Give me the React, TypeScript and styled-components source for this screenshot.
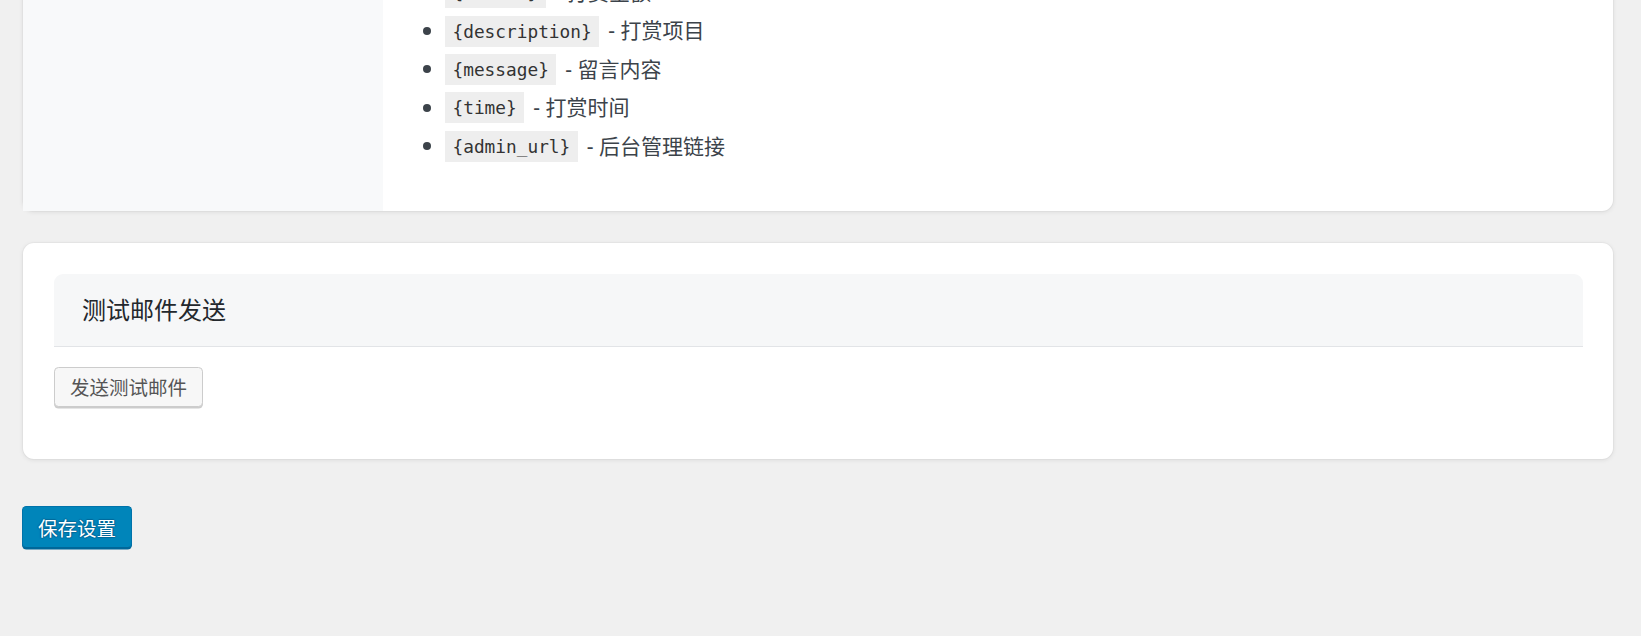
import React from "react";
import styled, { createGlobalStyle } from "styled-components";

const GlobalStyle = createGlobalStyle`
  html, body {
    margin: 0;
    padding: 0;
    background: #f0f0f0;
  }
  body {
    font-family: "Noto Sans", "Noto Sans CJK SC", sans-serif;
    color: #3c434a;
    overflow: hidden;
  }
`;

const Page = styled.div`
  padding: 0 28px 60px 23px;
  min-height: 636px;
  box-sizing: border-box;
`;

const Card = styled.section<{ $pull?: number }>`
  background: #ffffff;
  border-radius: 11px;
  box-shadow: 0 1px 5px rgba(0, 0, 0, 0.09), 0 0 0 1px rgba(0, 0, 0, 0.025);
  margin-top: ${(p) => (p.$pull ? `-${p.$pull}px` : "0")};
`;

const FormRow = styled.div`
  display: flex;
  align-items: stretch;
`;

const LabelCell = styled.div`
  width: 360px;
  flex: none;
  background: #f8f9fa;
`;

const FieldCell = styled.div`
  flex: 1;
  padding: 23px 0 41.5px 0;
`;

const TagList = styled.ul`
  list-style: none;
  margin: 0;
  padding: 0 0 0 40px;
`;

const TagItem = styled.li`
  display: flex;
  align-items: center;
  height: 29.4px;
  margin-bottom: 9px;
  font-size: 21px;
  line-height: 29.4px;
  color: #3c434a;
  white-space: nowrap;

  &::before {
    content: "";
    width: 8px;
    height: 8px;
    border-radius: 50%;
    background: #3c434a;
    margin-right: 14px;
    flex: none;
  }
`;

const Code = styled.code`
  display: inline-block;
  box-sizing: border-box;
  height: 31px;
  padding: 4px 7.5px 0;
  line-height: 23px;
  font-family: "DejaVu Sans Mono", "Liberation Mono", monospace;
  font-size: 17.8px;
  background: #eeeeee;
  color: #333;
`;

const Desc = styled.span`
  margin-left: 9px;
`;

const TestCard = styled(Card)`
  margin-top: 32px;
  padding: 31px 30px 30px 31px;
`;

const SectionHeader = styled.div`
  height: 72px;
  display: flex;
  align-items: center;
  padding: 0 28px;
  background: #f6f7f8;
  border-bottom: 1px solid #e2e4e7;
  border-radius: 9px 9px 0 0;
`;

const SectionTitle = styled.h2`
  margin: 0;
  font-size: 24px;
  font-weight: 400;
  line-height: 30px;
  color: #23282d;
`;

const ButtonRow = styled.div`
  margin: 20px 0 22px;
  display: flex;
`;

const SecondaryButton = styled.button`
  height: 40px;
  box-sizing: border-box;
  padding: 0 15px;
  border: 1px solid #cccccc;
  border-radius: 4.5px;
  background: #f7f7f7;
  box-shadow: 0 1.5px 0 #cccccc;
  color: #555555;
  font-family: "Noto Sans CJK SC", sans-serif;
  font-size: 19.5px;
  line-height: 38px;
  cursor: pointer;
`;

const Submit = styled.div`
  margin-top: 47px;
`;

const PrimaryButton = styled.button`
  height: 41.5px;
  box-sizing: border-box;
  padding: 0 15px;
  margin-left: -1px;
  border: 1px solid #0073aa;
  border-bottom-color: #006799;
  border-radius: 4.5px;
  background: #0085ba;
  box-shadow: 0 1.5px 0 #006799;
  color: #ffffff;
  text-shadow: 0 -1px 1px #006799, 1px 0 1px #006799, 0 1px 1px #006799,
    -1px 0 1px #006799;
  font-family: "Noto Sans CJK SC", sans-serif;
  font-size: 19.5px;
  line-height: 39px;
  cursor: pointer;
`;

const tags: { code: string; text: string }[] = [
  { code: "{amount}", text: "打赏金额" },
  { code: "{description}", text: "打赏项目" },
  { code: "{message}", text: "留言内容" },
  { code: "{time}", text: "打赏时间" },
  { code: "{admin_url}", text: "后台管理链接" },
];

export default function App() {
  return (
    <>
      <GlobalStyle />
      <Page>
        <Card $pull={45}>
          <FormRow>
            <LabelCell />
            <FieldCell>
              <TagList>
                {tags.map((t) => (
                  <TagItem key={t.code}>
                    <Code>{t.code}</Code>
                    <Desc>- {t.text}</Desc>
                  </TagItem>
                ))}
              </TagList>
            </FieldCell>
          </FormRow>
        </Card>

        <TestCard>
          <SectionHeader>
            <SectionTitle>测试邮件发送</SectionTitle>
          </SectionHeader>
          <ButtonRow>
            <SecondaryButton type="button">发送测试邮件</SecondaryButton>
          </ButtonRow>
        </TestCard>

        <Submit>
          <PrimaryButton type="submit">保存设置</PrimaryButton>
        </Submit>
      </Page>
    </>
  );
}
